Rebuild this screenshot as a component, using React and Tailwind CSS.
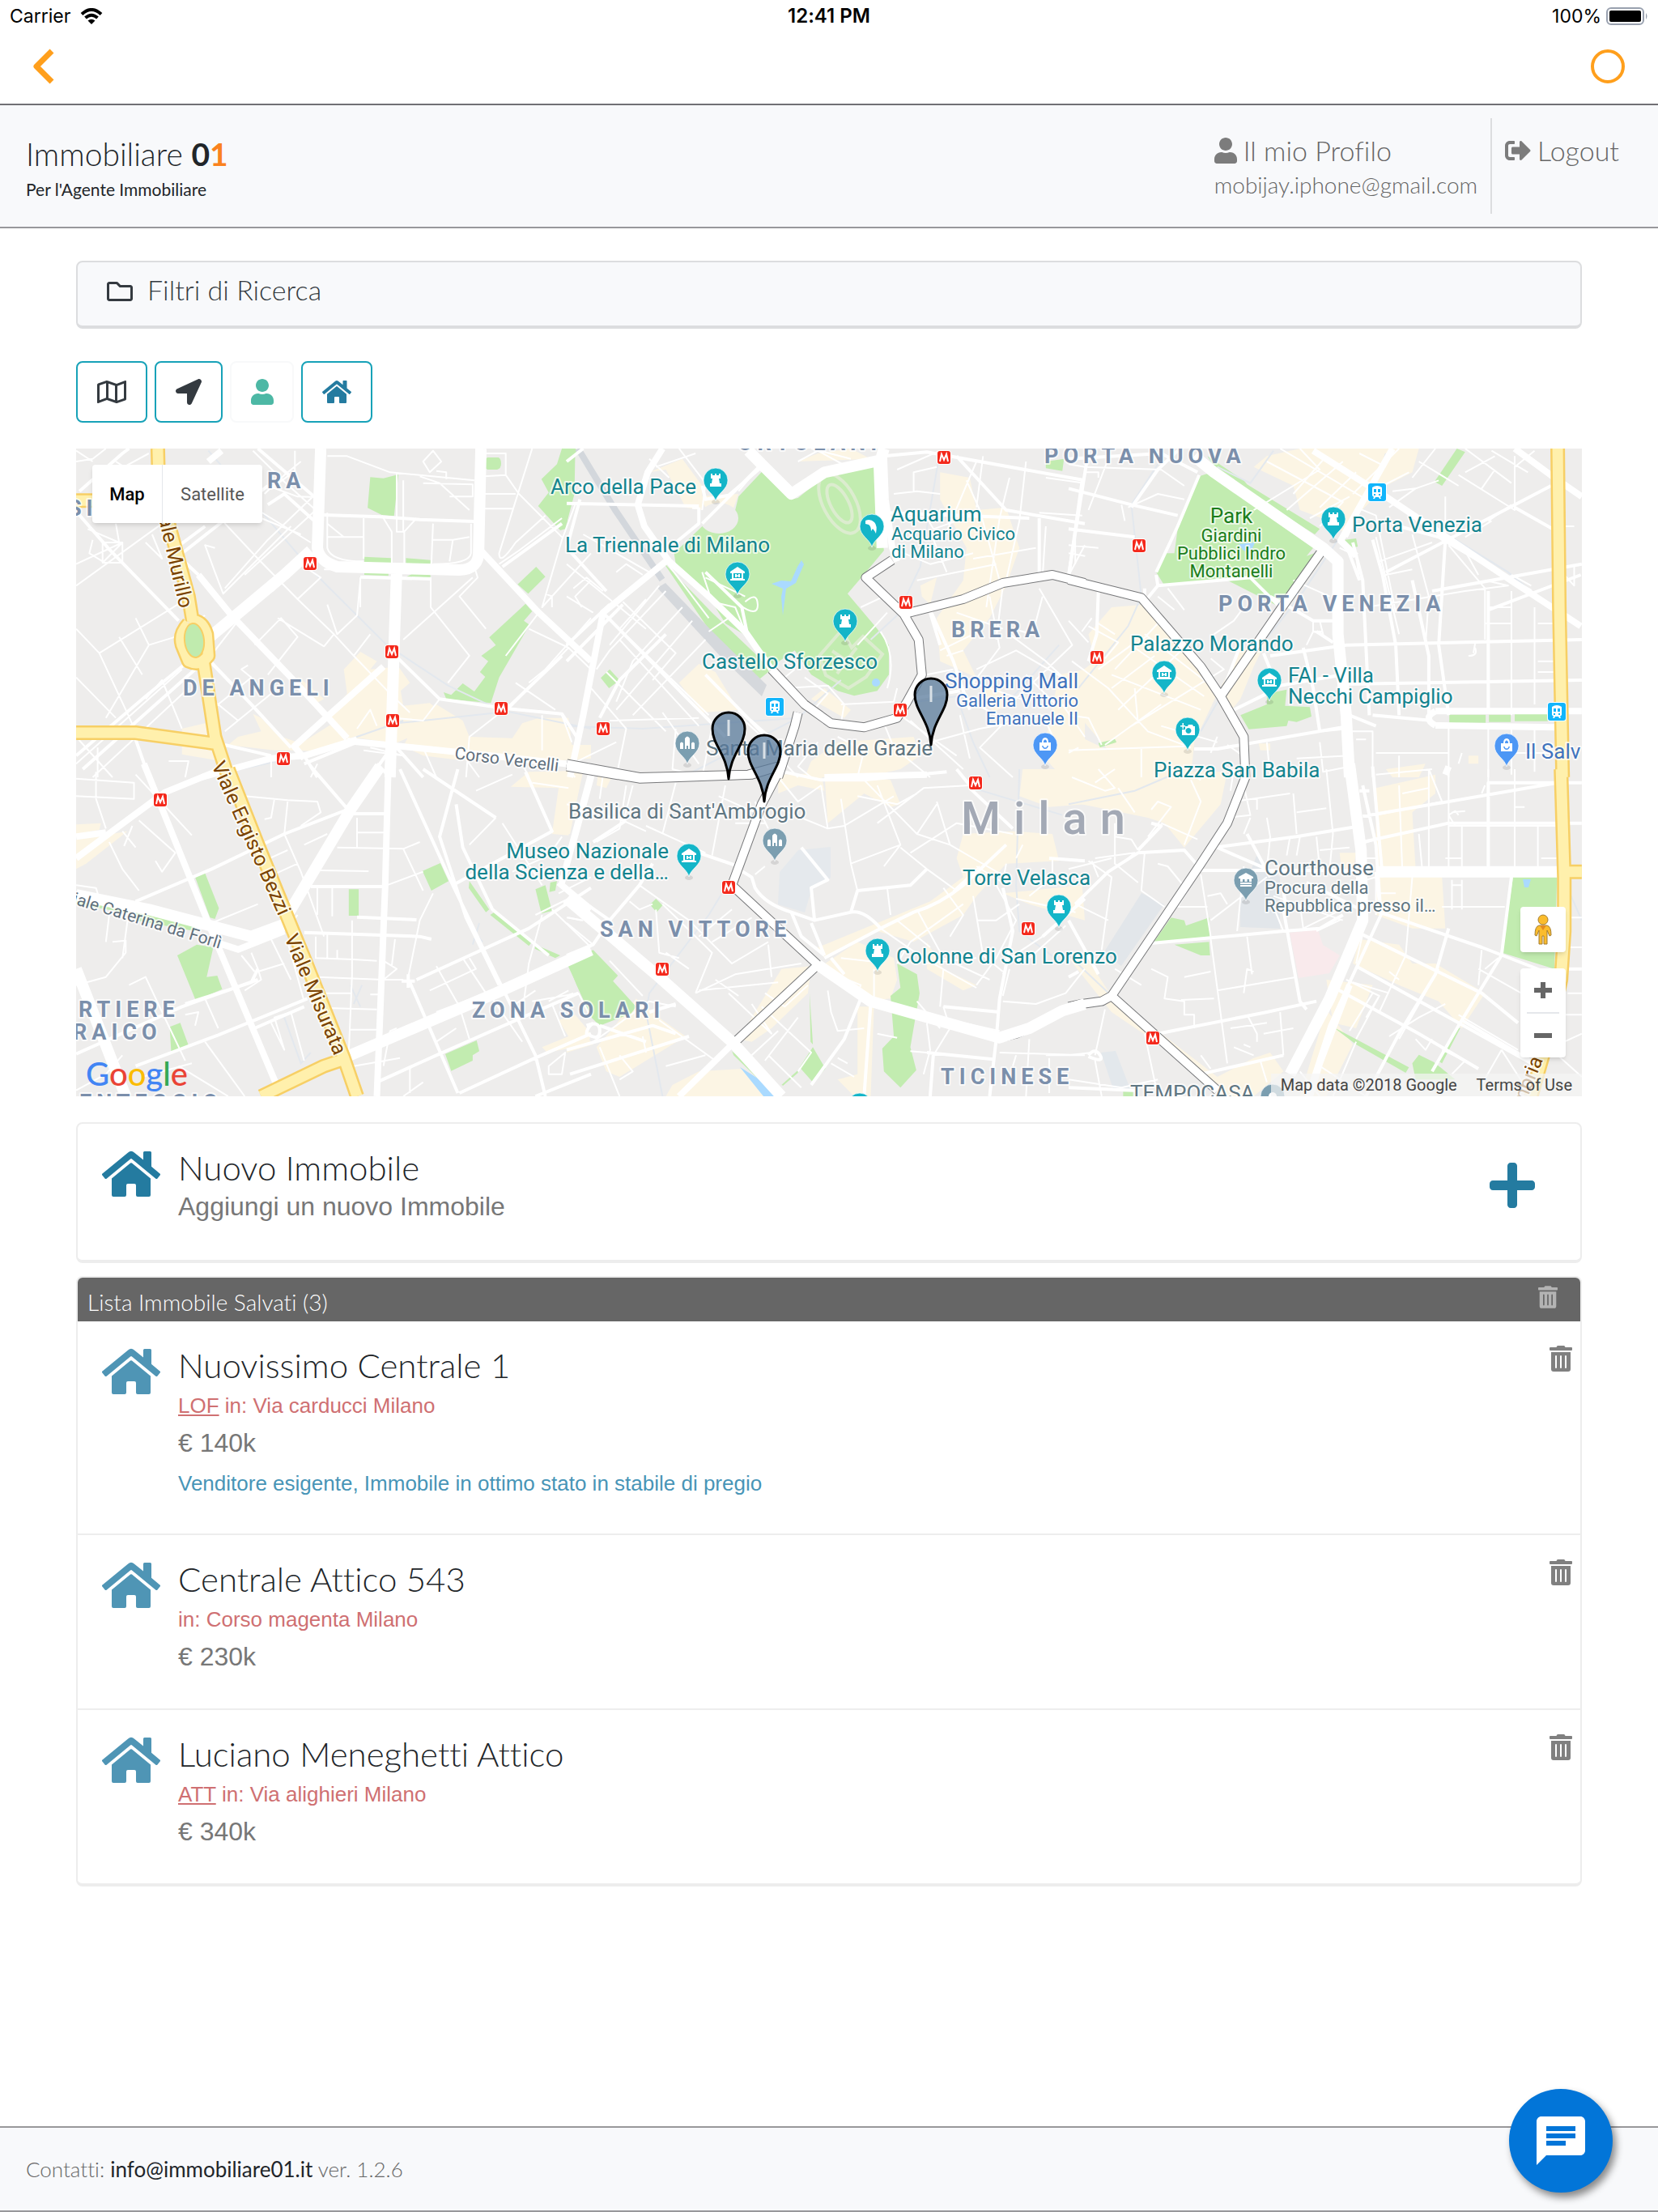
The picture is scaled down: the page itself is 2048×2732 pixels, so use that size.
import { FaHome, FaLocationArrow, FaPlus, FaRegFolder, FaRegMap, FaSignOutAlt, FaTrashAlt, FaUser } from 'react-icons/fa'

const listings = [
  { title: 'Nuovissimo Centrale 1', tag: 'LOF', address: 'in: Via carducci Milano', price: '€ 140k', note: 'Venditore esigente, Immobile in ottimo stato in stabile di pregio' },
  { title: 'Centrale Attico 543', tag: '', address: 'in: Corso magenta Milano', price: '€ 230k' },
  { title: 'Luciano Meneghetti Attico', tag: 'ATT', address: 'in: Via alighieri Milano', price: '€ 340k' },
]

// Vector tiles. Each tile has its own grid, 2.45 units per px across and 3 down.
const tiles = [
  {
    x: 90,
    y: 550,
    cream: 'M870 765L920 800L900 830L985 820L1020 880L992 910L1000 965L1080 955L1150 1020L1090 1010L1040 1070L975 1105L870 1085L820 1090L770 1010L830 920L820 830ZM545 995L570 1010L620 1075L690 1105L800 1020L840 1085L750 1135L680 1130L610 1130L470 1110L500 1080L570 1060ZM330 1050L400 1030L440 1110L450 1170L330 1145ZM1040 1020L1100 960L1180 1020L1200 1080L1330 1085L1360 1030L1410 1010L1500 1010L1510 1110L1568 1110V1160L1440 1170L1160 1165L1060 1150L1000 1115ZM680 855L760 940L730 960Z',
    green: 'M900 118L940 122L985 108L980 170L972 262L935 258L892 232ZM1255 45H1288Q1296 50 1296 68T1284 90H1255Q1246 86 1246 68T1255 45ZM1480 12L1520 12L1540 30L1520 40L1518 180L1490 310L1475 315L1408 225L1440 175L1418 125L1465 70ZM882 413L963 418V440L882 437ZM1008 418L1082 425V445L1008 440ZM882 463L955 467V484L882 480ZM1030 475L1082 480V490L1010 487ZM1402 450L1430 487L1378 550L1346 515ZM1370 587L1390 615L1365 650L1382 665L1290 860L1265 955L1130 940L1122 915L1145 925L1180 882L1215 912L1248 858L1232 840L1257 800L1236 780L1280 740L1260 712Z',
    transit: 'M410 20L560 230L720 460L950 740L1135 890L1290 980L1568 1050M980 1030L1290 990M390 1230L700 1150L860 1080L1000 1020',
    thin: 'M10 60L60 50L100 12M10 20L60 60M130 60L155 80L230 30M672 20V95L600 160M545 20L640 135L735 240M590 150L680 190L735 192M580 180L640 110L690 60M560 240L720 360M570 270L690 330M735 180L590 350L460 530M735 240L520 480M660 300L455 550L430 470L400 370L430 380M10 520L270 290M150 360L10 440M45 310L140 360L130 290M60 350L50 400L90 430M90 360H150V435H90ZM90 360L150 435M150 360L90 435M220 360L270 420L240 330M10 680L80 770L160 980L190 1060M330 580L80 770M190 640L230 740L310 710M140 710L210 850M230 740L100 1010M330 830L10 1180M60 1230L350 900M220 940L270 870L330 1050M10 860L130 1010M380 640L330 560M400 630L310 700M500 650L430 760M620 640L760 745L790 700L680 570M550 740L630 640L680 710L590 850M790 700L850 780L960 920L1020 990M850 780L900 700M770 590L800 700L860 630L870 500M605 540L690 440L750 490L680 570L560 420L430 250M740 130L760 20M770 40L830 40L960 100L1215 130M1060 60L1090 20L1115 60L1080 100ZM1100 95L1130 100V125M980 100V320H1000V130M1050 115L1110 140L1200 240M1060 140L1210 145V190H1140M880 270L880 420M770 340L820 340H880M820 340L770 290M1090 290L1085 440M1090 350H1150L1200 340M1150 350L1140 430M935 260L965 320V440M1040 270L1003 320V440M770 250V380Q780 430 880 430M1205 290V400Q1200 440 1090 440M760 460H960M870 490L870 600M1083 490V600L1200 780L1135 880M1210 490L1000 720M1215 450L1225 490L1170 560L1250 680M1390 12L1290 400Q1290 450 1340 360L1430 260M1240 30H1310V110L1245 115M1310 110L1350 180L1480 340M1245 180H1340M1240 235H1330M1290 440L1350 390L1480 270M1520 220L1480 350L1420 600L1568 400M1430 550L1450 560V600M1568 500L1520 560L1540 600M1410 620L1310 780M1380 680L1500 750L1568 830M1500 750L1320 975M1568 640L1430 830L1380 880M1310 975L1200 1080L1190 1230M1480 1000L1510 1100M1420 1000V1130M1340 880L1460 980M1110 940L1060 1020L970 1010M860 1050L900 980L920 1040M430 970L540 860L510 830L530 815M460 1060L600 920M410 800L540 960L630 1080M500 1020L430 950M10 1080L120 1230M75 1120V1230M290 1170L350 1170L340 1230M740 1180L720 1230M600 1170V1230M880 1130L1000 1150L900 1120M1060 1120L1100 1230M1170 1130L1230 1230M1360 1180L1380 1230M1480 1170L1520 1230',
    mid: 'M20 170L150 30L170 12M10 245L110 385L320 650M560 12L740 200M740 290L640 180L590 220M400 300L290 400M590 150L310 420M760 258L930 265L1050 275L1215 282M870 488L1085 495M310 400L380 480M400 780L540 960L660 1120M985 790L1110 940L1310 975L1480 995L1530 1090M340 810L220 930L10 1150M370 830L30 1200M1300 450L1480 290M460 1110L600 1150M1310 980L1480 780M860 1100L700 1180M970 1110L900 1230M980 1120L1060 1230M190 1090L230 1230M700 1150L740 1230',
    wide: 'M1235 390L1410 620L1568 800M380 480L480 630L660 860L830 1085M830 1095L1190 1140L1568 1190M940 820L770 1005L670 1115L700 1160M700 1150L600 1160L390 1230M700 1150L860 1090M410 60L450 20',
    major: 'M750 12L740 380Q745 430 800 450L1170 462Q1230 460 1228 390L1235 12M720 390L640 480L415 710M980 460L972 750L960 1230',
    cased: '',
    yellow: 'M257 12L260 150L290 290L350 560L362 650M350 660Q320 700 330 740L350 800Q385 820 410 780L405 700Q390 640 350 650M395 800L430 1080L470 1230M10 1065L190 1065L430 1105M10 205H60',
  },
  {
    x: 90,
    y: 950,
    cream: 'M10 205L85 200L80 225L10 240ZM10 262L165 230L40 350L10 370ZM1380 10L1545 5L1500 245L1450 240L1470 70L1325 65ZM1470 930L1520 910L1568 980L1560 1020L1435 1050L1420 1030L1500 990Z',
    green: 'M370 400L400 385L442 515L430 555L415 550ZM10 480L175 515L175 535L10 500ZM190 530L370 580L370 600L190 560ZM316 690L375 650L425 660L405 770L437 765L452 815L372 857ZM293 955L325 940L352 1030L298 1055ZM835 445H865V543H835ZM1058 377L1112 348L1137 415L1085 450ZM1200 415L1260 520L1250 530L1198 440ZM1275 530L1390 640L1380 655L1263 540ZM1400 650L1475 690L1460 700L1398 665ZM1400 445L1430 430L1450 525L1418 535ZM1445 420L1465 415L1460 450L1442 455ZM1492 712L1568 675V860L1545 850ZM1127 1055L1222 1005L1230 1045L1210 1060V1080L1145 1118Z',
    transit: 'M10 330L130 220L280 85L460 5M840 800L870 880M850 870L875 800M640 920L690 1090L720 1050M1200 580L1240 640M1230 570L1210 650',
    thin: 'M10 35L185 50V110L10 100M70 10V110L100 220M190 20L360 245M110 270L150 370L200 450M200 190L310 310L270 380L250 340M150 230L190 290M180 210L155 285M10 430L70 440L80 480M120 640L160 635V680L100 770L10 800M170 520L150 700M520 100L650 115L740 120L750 160L690 210M610 110L600 180L580 185M650 120L640 240L690 380L760 620M650 300L560 350M770 240L700 280M680 350L590 400M800 290L1000 295L1050 270M860 235H945M860 180V290M750 375L895 378M740 440V540M785 440V545M680 540L640 600M770 610V700M800 670V700M735 620V700L850 705L920 710M845 560V760L835 1050M740 770L940 780M740 830L840 830M770 885L920 890M840 965L930 965M900 835H940M940 710L980 740L940 780M940 780H1000M1000 295L1060 450M950 430L1060 380M975 630L965 730M1090 460L1050 560L1015 770M1100 730L1170 880L1200 1000M1180 700L1250 830L1100 900M1080 820L1220 740L1200 700M1340 870L1400 820M1270 850L1360 1010M1100 1010L1160 960M1390 860L1530 830L1568 920M1450 870L1490 990M1500 820L1440 860M1568 560L1500 480L1400 540M1420 540L1380 720L1365 860M1450 520L1568 660M1500 550L1540 560M1220 80L1330 20M1280 180L1200 280M1300 200L1420 430M1390 50L1500 70M1480 250L1440 320L1330 380M1470 460L1568 400M110 540L100 640M420 570L560 500M540 680L560 740L570 780L520 820M510 690L550 750M560 750L640 720M600 630L660 780M650 640L700 860M170 800L220 770L270 900L340 1080M340 910L380 900L370 950M400 850L440 960M10 1190L100 1130L150 1060M210 1140L360 1090M400 1010L520 1212M320 1100L470 1212M600 940L640 1040L610 920L660 900L700 1080M940 1100L960 970L980 960M850 1100L990 1070M1020 1200V1100M1060 1160L1000 1212M1440 1100L1490 1050L1480 1130L1440 1130Z',
    mid: 'M190 490L420 370L640 240L830 150M990 0L1150 430L1240 660L1400 1060L1430 1212M720 -10L840 160M720 435H945M700 605L1050 620L1085 630M860 548L1040 558M1040 780L1380 590L1568 440M10 1055L330 880L560 780M190 1100L440 985L710 850M1170 1200L1390 1075L1568 980M1020 790L1165 1200M560 740L540 790L340 870M1165 0L1110 250L1190 550L1290 800M1160 130L1180 290L1270 520L1440 690M1060 0L1280 180M1370 10L1450 230L1150 430M550 960L700 880M920 1160L1100 1060L1360 920L1530 830M1015 760V810M995 785H1035M1400 1212L1568 1130M840 165H945M960 30L920 -20',
    wide: 'M10 330L130 220L280 85L430 10M10 250L100 235M430 640L500 668L640 600M215 -20L420 600L620 1180M1470 420L1568 520M1568 20L1480 420M955 -20L945 440L920 1212',
    major: 'M10 465L230 520L540 620L650 570M930 -10L840 150L650 540M10 740L160 1212M820 1070L1030 960L1280 830L1568 670',
    cased: '',
    yellow: 'M470 0L560 280L640 520L700 700L820 1070L860 1212M820 1075L760 1100L570 1212',
  },
  {
    x: 700,
    y: 550,
    cream: 'M250 100L350 50L410 150L410 240L360 230L300 90ZM400 190L520 180L500 250L430 250ZM860 12L920 50L700 60L760 30ZM1130 100L1220 120L1240 240L1330 230L1370 380L1330 520L1280 640L1200 760L1240 860L1130 800L1120 640L1200 500L1210 380L1130 200ZM340 880L400 810L450 840L520 980L410 990ZM780 900L860 980L840 1010L740 940ZM820 1100L1050 1080L1070 1150L1010 1200L900 1230H720L740 1170ZM1250 900L1300 880L1340 960L1290 990ZM1490 850L1568 830V1230H1500L1440 1150ZM1070 520L1120 490L1100 590L1075 560Z',
    green: 'M595 92L680 200L700 195L780 115L930 70L945 200L960 390L895 485L850 550L940 680L975 740L975 850L940 910L870 928L820 910L740 850L690 760L620 820L585 790L550 710L480 660L430 560L330 440L325 400L410 300L500 290L520 190ZM0 12L45 20L20 40L18 180L0 290ZM290 430L440 620L620 830L585 865L440 700ZM130 830L160 870L128 900L103 862ZM1450 60L1505 50L1500 95L1450 85Z',
    transit: 'M1130 20L1070 450L1000 630L920 720M0 1040L230 1050L700 1010L830 870M1000 960L1180 930L1230 1100L1280 1230M1330 960L1490 740M350 1230L700 1010',
    thin: 'M0 440L120 560L240 680M50 330L250 470M0 560L80 620M20 530L60 490L110 540M150 470L180 440L230 480M280 520L130 740M170 580L330 770L260 870M240 570L160 680L430 1000M300 540L130 760L90 830M350 600L200 800L150 950M380 650L150 980M420 720L200 1000M160 720L400 1040M120 840L300 1060M60 880L180 1050L150 1230M130 1020L400 1010M250 50L310 120M340 12L420 140L410 240M270 80L390 30M590 70L520 170M700 60L760 20L850 80M740 12L860 50M410 470L440 580L510 600L540 690M420 490L540 560M520 590Q580 640 578 590T540 580M300 430L430 640M430 690L490 640M290 990L400 1180M330 1050L320 1200L420 1230M440 1040L410 1230M520 1000L600 1090M600 1100L700 1230M660 900L790 890M790 890L840 960L830 1030M720 860L790 920L740 990M690 830L640 880M830 960L990 950L1000 900M950 690Q1000 780 970 900M890 600L960 560M970 620L880 740M1000 90L1130 20M990 180L1060 170L1130 180M1050 170V100L1120 80M1000 260L1090 270L1110 310L1250 250M980 380L1100 440L1230 400M1060 500L1300 440M1150 470L1110 350M1240 60L1150 320M1260 40L1240 230M1390 60L1370 280M1450 120L1568 140M1340 120L1310 270L1270 600M1430 250L1560 260M1210 130L1250 240L1310 500M1370 280L1330 500M1450 300L1440 490M1568 370L1520 480M1230 420L1420 380M1440 560L1410 700L1350 680M1430 530L1530 740L1350 950M1320 680L1180 620M1320 520L1300 720M1280 560L1310 750L1230 880L1400 950M1130 760L1230 700M1150 780L1200 760M1240 830L1360 760L1500 860M1090 850L1170 830M1340 700L1450 800L1520 880M1390 850L1480 960M1040 1020L1110 1100L1200 1200M960 1030L990 1120L1100 1230M1020 1010L1180 1150M820 1080L900 1130L880 1230M1100 1100L1250 1050L1380 1020M1240 960L1330 1020L1250 1120L1350 1230M1300 1040L1440 1000L1480 1100M1190 1000L1220 1160M1500 960L1568 1080M0 1190L150 1100M760 1100L700 1190L740 1230',
    mid: 'M0 215L400 225M0 60L50 12M40 200L0 380M0 380L120 540M110 620L350 920L480 1080M0 740L130 590M170 590L0 800M590 70L410 290M410 150L420 200L490 185L590 80M400 230V290L330 360M420 470L530 600L545 690M960 40L1090 25L1568 130M1180 40L1330 240L1568 290M970 250L1400 270M1100 610L1170 800L1220 980M1130 740L1100 620M1040 940L1190 910M1430 270L1430 480M1560 130L1520 480M100 1010L160 870L300 700M520 980L640 1110M420 850L620 1100M380 230H400',
    wide: 'M300 430L110 620L50 1000L10 1230M290 12L245 100L215 220L235 300L310 430L430 560L540 690L620 830M960 40L965 200L985 380L1000 430',
    major: 'M550 20L590 70L680 180L780 100L950 55L960 12M945 50L955 380',
    cased: 'M985 425L905 490L1020 625L1065 720L1075 850L1030 950L1000 1010L900 1045L800 1030L720 960L620 830M1020 625L1200 570L1320 510L1470 480L1568 510M700 990L690 1040L640 1230M0 1180L220 1230L550 1220L640 1190',
    yellow: '',
  },
  {
    x: 700,
    y: 950,
    cream: 'M0 60L40 60L10 240L0 240ZM95 20L140 20L120 70L90 60ZM640 20L770 15L780 80L700 60L640 90ZM780 10L980 40L1010 130L980 140L900 90L790 200ZM1200 240L1350 230L1470 240L1490 340L1330 350L1240 470L1200 540L1050 640L940 600L780 700L760 660L880 600L1000 540L1100 490L1200 400L1180 330ZM1380 0H1568V130L1460 140L1370 100ZM880 640L990 700L1000 780L980 850L900 860L770 730ZM1320 460L1560 430L1568 560L1400 500ZM650 740L740 730L730 830L620 960L560 1010L520 1000ZM210 850L290 930L360 990L160 1140L120 1120L90 1030L140 960ZM880 880L930 880L920 1212H870L820 1150L880 1130ZM0 1010L60 990L80 1020L0 1050ZM400 1120L530 1110L600 1212H300L320 1170ZM1090 640L1140 740L1240 800L1200 820L1090 740Z',
    green: 'M0 710L80 670L155 765L140 785L210 880L195 905L100 950L75 920L30 800ZM252 502L270 480L290 505L272 530ZM1000 720L1060 760L1068 830L1040 1030L1058 1115L1010 1180L960 1120L955 1035L990 990L980 840L1010 810ZM500 1045L600 1150L590 1160L505 1060ZM745 1030L783 1110L745 1160L705 1105ZM735 830L742 960L745 1020L738 1010ZM650 1170L700 1115L700 1125L655 1172Z',
    transit: 'M590 130L500 400L430 540L250 830L240 900L290 1212M1370 0L1360 430L1370 600L1500 720M1230 70L1500 170',
    thin: 'M0 130L170 190L240 230M180 60L160 220L90 270M110 20L100 110M200 60L170 200M330 50L290 240M480 60L440 320M240 210L420 310M460 100L570 160M510 200L600 200M570 120L610 220M600 360L570 390M620 0L700 120L770 60M770 60L790 220L840 210M650 150L790 220M830 110L860 350L880 450M840 210L990 100M880 100L1000 130M900 40L1060 240L1120 130M940 200L1080 70L1220 60M1000 130L1060 90M1010 280L860 350M1010 290L1090 370L1180 450L1230 380M1060 240L1160 280L1230 330L1330 400M1040 310L1180 200L1350 240M1090 370L1040 430M960 360L1010 280L940 60M1120 120L1160 280M970 440L980 540M1140 440L1200 540L1160 620M1250 360L1170 450M1380 280L1360 330M1330 350L1320 420L1240 360M1470 330L1470 400L1400 470M1230 470L1260 690L1320 750M1300 430L1360 560L1300 700L1240 800M1360 480L1540 530M1370 500L1300 560L1240 560M1440 620L1340 700L1320 760M1510 580L1400 700M1200 500L1040 640M1060 520L1140 700L1280 780M1000 560L1100 660M1040 640L1000 720M1080 720L1240 700M950 590L1080 700L1240 810M1140 740L1130 880M1060 860L1130 960M830 700L940 715M0 570L80 650M0 550L50 560M20 830L0 840M270 520L280 680L340 700M290 500L440 680L390 830M190 490L220 520L260 500M220 430L370 560L500 720L610 640M610 650L620 770M400 620L500 520M440 640L560 550M300 680L370 740M390 830L510 760L710 720M400 820L640 790M520 840L450 780M130 710L230 840M330 880L250 860L150 950L80 1010M360 870L480 990M490 830L620 980L560 870M590 880L740 1050L700 1120M640 970L560 1060M700 920L600 1080M730 800L660 880L600 830M610 1060L710 1180M160 1060L200 1120L160 1150M230 990L240 1050M100 1030L160 1212M300 1100L420 1060M280 930L450 1080M790 820L800 900L820 970L900 960M850 780L890 800L880 830M930 740L930 850M940 980L1000 995M820 1070L850 1090M800 1090L870 1140M1040 1045L1090 1050M1090 940L1100 1040L1080 1130M1140 880L1160 960L1110 1060M1200 940L1310 970M1320 860L1420 870L1510 830L1568 740M1340 740L1320 840M1450 1060H1568M1360 1060L1350 1100M1310 1050L1568 1060M1460 1070V1200M1400 1000L1390 1212',
    mid: 'M0 690L80 650L130 560L220 430L260 350M130 560L60 500M80 270L180 190M520 360L400 310M520 370L560 400L570 440Q600 500 680 530L750 560L860 530L880 450L1040 430L1090 370M750 560L740 440L790 410L710 290M740 570L780 690M860 530Q900 520 950 590L780 700M950 590L1050 530Q1130 500 1200 430L1330 280M680 530L710 620L780 690M0 1040L260 950L330 980M100 950L240 1010M60 950Q100 930 100 970T60 980Q60 960 80 940M10 1130L370 990M330 870L250 900M920 870L900 1212M890 850L840 1000L740 1170M1310 850L1300 1000L1280 1212M1110 1050L1100 1212M1090 1050L1290 1075M1140 880L1310 900M1320 440L1350 600L1310 850M1460 330L1568 340M1440 620L1568 480M1220 70L1350 220M620 0L770 40L900 40L1150 10M840 760L800 700M1220 60L1180 0',
    wide: 'M500 1020L340 1212M80 0L20 270M780 30L1090 20',
    major: 'M0 480L270 760L500 1010L650 1212M760 725L920 860L1310 995L1400 960L1500 895L1568 870',
    cased: 'M0 -10L220 35L560 20L640 -10M650 -10L590 130L500 430L760 725L510 1010M1310 995L1360 980L1400 960',
    yellow: '',
  },
  {
    x: 1320,
    y: 550,
    cream: 'M600 40L700 12L1060 12L1040 100L960 150L880 250L840 340L810 290L700 240L680 150L560 80ZM130 600L230 590L300 680L450 920L380 1100L370 1230H0V1060L120 1130L50 1030L20 960L0 870L80 800L60 700ZM520 760L600 720L560 820L520 940L480 1000L450 920ZM960 1200L1080 1180L1060 1230H980ZM575 1105L610 1105V1130L580 1130ZM1210 1150L1240 1150V1180L1210 1180Z',
    green: 'M395 115L420 105L740 380L720 410L765 390L640 600L560 550L480 500L290 520L265 470L290 400L320 400L330 310ZM540 145L760 310L745 330L530 165L450 100L420 40L530 130ZM1175 12L1200 25L1130 150L1107 135ZM835 350L870 345L875 375L860 380ZM600 920L660 905L655 965L730 970L735 1005L690 1025L665 1020L660 1040L545 1052L520 1000L600 960ZM1152 998H1262V1028H1152ZM1272 998H1338V1025H1272ZM1350 995H1450V1022H1350ZM90 1103L140 1088L145 1100L95 1120Z',
    transit: 'M270 70L190 220L220 560L180 670L30 900M620 20L550 140L450 80M740 20L960 190L1330 470L1480 620L1500 1230M960 30L930 140L700 560L460 930L400 1060',
    thin: 'M50 100H90V120M0 70L50 80L280 90L350 150M180 230L270 180L350 200M120 50L60 240M160 220L170 280M0 370L90 380M20 340V440M0 400L50 410M0 650L60 730M60 670L150 730L110 790M90 660L140 700M10 800L120 900L240 1060L370 1120M90 830L190 740M130 850L400 980M200 750L410 930M230 700L420 880M270 660L140 830M130 900L260 780M190 1040L470 830L430 790M150 980L350 750M210 1030L200 900M110 1110L280 960M0 1000L60 1010L100 1110M280 1040L450 1100M0 1130L350 1115M220 1120V1230M30 1120L0 1140M700 12L760 90L560 240M640 12L900 200M780 40L680 180M830 60L660 240M870 100L760 230M600 60L830 210L760 300M850 190L730 270M1000 12L860 180M880 30L960 80M1030 100L950 150M1060 60L1180 150M1110 12L1040 120M1200 12L1340 140M1200 100L1290 40M1250 160L1290 90M1050 160L980 170M1350 40V240L1180 110M1350 80L1410 20M1270 280L1340 220M1390 100L1280 20M970 230L1050 160L1120 130M870 230L930 260L990 620M930 340L1000 700M1040 330L1090 560L1080 740M1100 360L940 430M1150 370L1260 530L1260 720M1140 190V340M1200 340L1280 280M1190 370L1240 480M1270 600H1340M1260 660H1340M1420 660H1480M1340 540V1000M1410 600V960M1420 800H1470M1420 840H1470M1400 520L1340 480M1530 440V520L1500 480M1530 300H1500M960 480L1040 460M1260 500L1330 520L1200 540L900 600M820 380L870 410L880 500M760 650L770 700L740 690L720 740M740 650V690H770M680 500L790 560M440 700L500 650L530 600M300 530L350 610M270 560L320 610M600 1100L610 1230M690 1160L850 1150M760 1100L770 1210L850 1190M770 1060L850 1050M860 1060H920V1230M870 1090H900M1000 1150V1230M1150 1040V1230M1190 1140L1180 1180M1270 1040V1230M1340 1050V1220M1350 1140H1480M1410 1050V1210M930 1140H1150M450 1080L430 1140M480 1110L540 1160M40 690L70 640M1210 780Q1240 780 1230 750M1230 735L1225 770',
    mid: 'M0 160L190 220L330 260M60 20L0 480M0 310L200 340M330 20L270 90L190 230M395 110L330 300L265 470M0 50L280 30L390 100M265 480L270 520L550 490L640 600M610 780L840 740L1553 720M590 770L610 830L605 900M710 750L740 900L760 1060M500 980L600 920L640 890L830 850M830 885L1553 870M380 1125H450L850 1040M930 120L840 340M920 350L950 480L990 740L1000 1000M1000 300L1120 340L1400 540M1140 350L1120 740L1150 1000M1270 540V980M860 360L890 500L910 1000M1040 500L1090 780V1000M1550 480L1270 610M1460 150L960 470M1100 540L1553 440M1350 230L1480 320M840 370L880 500M920 1000L1100 1020M860 1230L850 1000L930 1040M670 600L740 650H820M610 560L700 620M460 930L520 740M230 530V580L270 520M750 690L800 730M90 540L85 700L60 800',
    wide: 'M740 20L960 190L1350 510L1550 670M1350 12L1470 120L1553 190M1110 985H1553M1110 1038L1470 1045M1110 985Q1070 1010 1110 1038M980 12L820 360M820 350L870 410',
    major: 'M380 40L440 100L770 380L815 430L815 700L840 1000L850 1230',
    cased: 'M0 498L220 565L280 650L400 820L460 930L530 1080L535 1230M770 385L640 610L460 930',
    yellow: 'M1480 12L1485 600L1495 1230',
  },
  {
    x: 1320,
    y: 950,
    cream: 'M0 10L400 10L480 10L460 130L350 290L290 200L240 180L0 120ZM930 70L1110 20L1110 90L1040 160L1050 370L930 370ZM930 400L1130 400L1140 590L1040 590L930 540ZM880 630L1000 650L1040 720L1110 720L1260 830L1190 960L1120 860L1000 800L860 720ZM0 700L60 710L130 840L270 970L450 1140L560 1070L610 1050L650 1120L560 1212H460L420 1140L130 900ZM780 890L700 1212H780L860 1020ZM780 780L920 800L870 960L800 940ZM820 310L870 310L860 380L825 360ZM0 430L40 470L0 480Z',
    green: 'M1345 400L1478 400L1470 740L1312 680ZM310 550L350 560L355 580L425 550L428 625L255 645ZM320 650L425 640L428 690L400 690ZM825 730L845 740L822 805L803 795ZM800 955L1030 1105L1020 1125L870 1020ZM1175 955L1185 960L1130 1090L1118 1080ZM1040 1090L1060 1058L1105 1085L1170 1150H1050ZM165 1195H195V1212H165Z',
    transit: 'M0 130L200 80L330 12M1500 0L1495 400L1553 560M0 690L130 840L440 1190',
    thin: 'M90 0L140 70L110 80L10 30M140 0L80 50M250 150L270 120L310 140L240 250M280 200L390 260M370 40L400 120L350 280M400 40L370 20M150 70L200 160M140 250L190 260L210 300M140 200V350L210 420M80 330L200 310L150 360M0 370L130 330M230 310L220 450L290 510M270 350L300 360L360 450L330 510M70 340L90 400M20 500L120 560M100 670L130 400L60 340M300 510L420 510M400 390L430 620M420 470L460 460L480 500M530 360L510 600M430 560L600 400M480 180L550 170L530 60M570 110V150M680 90L690 240M690 160L780 145M500 120L670 90M550 180L530 240M600 180L610 250L600 370M670 250L660 320M750 250L760 370M690 320L700 250M760 300L850 290M780 0L800 240L790 370M500 0L490 80M900 330H930M880 280L930 260M930 20L1100 0M930 170L1130 120L1090 0M1010 90L1090 70M1000 60L1010 380M1090 0V370M1060 240L1070 370M1150 0V370M1150 210H1480M1270 0V370M1190 210V370M1140 330H1190M1350 0V360M1420 210V360M1430 330H1480M1160 160L1200 155M1170 210L1150 170L1170 155L1180 170M1250 90L1260 60M1350 140H1380M940 460H990M900 410L930 400V540M1040 400L1020 690M1160 410V520M1190 410V520M1160 430H1190M1130 510H1320M820 560L750 600M610 480L650 600M620 470L830 560M700 500L710 590L810 530M540 620L555 760M430 630L480 1090M350 770L430 750M250 740L300 770L290 850L350 860L350 910L380 910V960M140 740L220 800M450 820L690 770M340 855L440 850M530 830L540 740L560 750M540 910L570 980V1010M530 1020L550 1030M590 980L680 960M640 900L650 1060M490 960L600 940M500 1030L560 1060M580 1080L600 1160M110 890L80 1060M0 1060L70 1050M80 1080L100 1212M230 980L270 1212M0 1150L160 1180L270 1150M400 1060L430 1110M840 780L940 840L900 920M860 790L970 830M920 830L850 970M970 750L1000 780M890 610L870 720M940 840L870 1000M1020 690L940 900M1120 740L1000 1000M1250 670L1240 800M1240 740L1370 830M1260 740L1300 700M970 990L1060 920L1140 870M1050 1000L1080 1040L1100 1000M1130 1040L1200 1080L1160 1130M1310 1040L1240 1190M1400 1212L1310 1040M1500 910H1553M1510 830H1553M1510 550H1553M1510 660H1553M1500 1010L1553 980M1180 910L1360 1040M1480 1060L1553 1140M700 1120L760 1212M760 1100L900 1212M870 1010L800 1212',
    mid: 'M440 290L690 250L860 215M440 285L600 370M400 375H880M250 645L430 625L650 600L760 590L830 540M650 520L700 860L720 890M660 530L650 450M720 420L900 530M20 500L120 380L210 310L350 300L400 370M270 980L600 900L750 860M400 1130L650 1060M540 240L610 400M930 380L945 540L790 950L720 1212M890 60L930 280L945 540M920 -10L950 400M880 80H910M890 175L1480 50M890 270L1150 200H1553M885 610L1250 830L1360 940M940 530L1250 660L1440 750M870 730L1180 940L1430 1110M790 800L1060 980L1240 1110M1340 400L1310 690L1180 950L1100 1120M1150 590L1110 760L1000 980L900 1212M1270 400V50H1553M0 770L30 750M0 560L90 760M250 200L280 210L210 300M0 1180L200 1190M60 1060Q80 1030 95 1060T60 1065M1190 930L1440 1110M1510 740H1553',
    wide: 'M1150 -10L1140 20M850 800L760 1090L730 1212',
    major: 'M850 -20L885 300L890 560L790 850L670 1130M930 380H1480',
    cased: 'M535 30L480 200L400 350L130 840L100 860L40 870L0 880M130 840L450 1190',
    yellow: 'M1490 0L1500 400V600L1490 780L1450 1000L1400 1212M1510 380H1553',
  },
]

const roadLayers = [
  { key: 'thin', className: 'stroke-white stroke-2' },
  { key: 'mid', className: 'stroke-white stroke-4' },
  { key: 'wide', className: 'stroke-white stroke-8' },
  { key: 'cased', className: 'stroke-[#77787a] stroke-12' },
  { key: 'major', className: 'stroke-white stroke-14' },
  { key: 'cased', className: 'stroke-white stroke-10' },
  { key: 'yellow', className: 'stroke-[#f7cf65] stroke-18' },
  { key: 'yellow', className: 'stroke-[#fff0ac] stroke-13' },
]

const metroStops = [
  [383, 696], [484, 805], [485, 890], [619, 875], [350, 937], [198, 988], [1166, 565], [1119, 744], [1112, 877],
  [745, 900], [1205, 967], [900, 1096], [1270, 1147], [818, 1197], [1407, 674], [1355, 812], [1424, 1282],
]

const trainStops = [[957, 873], [1701, 608], [1923, 879]]

const pois = [
  { x: 884, y: 593, icon: 'tower', color: 'fill-[#14b5c8]' },
  { x: 1077, y: 650, icon: 'fish', color: 'fill-[#14b5c8]' },
  { x: 911, y: 709, icon: 'museum', color: 'fill-[#14b5c8]' },
  { x: 1044, y: 767, icon: 'tower', color: 'fill-[#14b5c8]' },
  { x: 1291, y: 920, icon: 'bag', color: 'fill-[#4d97f5]' },
  { x: 849, y: 918, icon: 'church', color: 'fill-[#7b9eb0]' },
  { x: 957, y: 1038, icon: 'church', color: 'fill-[#7b9eb0]' },
  { x: 851, y: 1057, icon: 'museum', color: 'fill-[#14b5c8]' },
  { x: 1308, y: 1120, icon: 'tower', color: 'fill-[#14b5c8]' },
  { x: 1084, y: 1174, icon: 'tower', color: 'fill-[#14b5c8]' },
  { x: 1062, y: 1365, icon: 'tower', color: 'fill-[#14b5c8]' },
  { x: 1647, y: 641, icon: 'tower', color: 'fill-[#14b5c8]' },
  { x: 1438, y: 831, icon: 'museum', color: 'fill-[#14b5c8]' },
  { x: 1568, y: 840, icon: 'museum', color: 'fill-[#14b5c8]' },
  { x: 1467, y: 901, icon: 'camera', color: 'fill-[#14b5c8]' },
  { x: 1861, y: 921, icon: 'bag', color: 'fill-[#4d97f5]' },
  { x: 1539, y: 1087, icon: 'court', color: 'fill-[#7b9eb0]' },
  { x: 1572, y: 1354, icon: 'dot', color: 'fill-[#7b9eb0]' },
]

const poiGlyphs = {
  tower: 'M-6 -8H-4V-6H-1V-8H1V-6H4V-8H6V-2H4L5 4H7V8H-7V4H-5L-4 -2H-6Z',
  museum: 'M-9 -3L0 -9L9 -3V-1H7V6H9V8H-9V6H-7V-1H-9ZM-5 -1V5H5V-1ZM-3 0H-1V1.500H1V0H3V4H1V3H-1V4H-3Z',
  fish: 'M-8 -7Q-2 -10 3 -5Q7 -1 5 9Q3 5 1 3L-1 6Q-1 0 -4 -2L-8 -3Z',
  bag: 'M-7 -3H-4Q-4 -9 0 -9T4 -3H7V7H-7ZM-2 -3H2Q2 -6.500 0 -6.500T-2 -3ZM-4 1Q-3 5 0 5T4 1H2.500Q2 3.500 0 3.500T-2.500 1Z',
  church: 'M-9 7V0Q-7 -3 -5 0V7ZM-3 7V-6Q0 -11 3 -6V7H1V3H-1V7ZM5 7V0Q7 -3 9 0V7Z',
  camera: 'M-3 -4H0L1 -6H6L7 -4H9V7H-7V0H-3ZM1 -2A3.500 3.500 0 1 0 1.010 -2ZM-9 -5H-6.500V-8H-5V-5H-3V-3.500H-5V-1H-6.500V-3.500H-9Z',
  court: 'M-9 -4L0 -9L9 -4V-2H7V2H4V-1H1.500V2H-1.500V-1H-4V2H-7V-2H-9ZM-7 3H7V5H-7ZM-7 6H7V8H-7Z',
  dot: 'M0 -5A5 5 0 1 0 0.010 -5Z',
}

const poiLabels = [
  { x: 860, y: 610, text: 'Arco della Pace', anchor: 'end' },
  { x: 951, y: 682, text: 'La Triennale di Milano', anchor: 'end' },
  { x: 1100, y: 644, text: 'Aquarium' },
  { x: 1101, y: 667, text: 'Acquario Civico', small: true },
  { x: 1101, y: 689, text: 'di Milano', small: true },
  { x: 867, y: 826, text: 'Castello Sforzesco' },
  { x: 1332, y: 850, text: 'Shopping Mall', anchor: 'end', color: 'fill-[#3f73bd]' },
  { x: 1332, y: 873, text: 'Galleria Vittorio', anchor: 'end', small: true, color: 'fill-[#3f73bd]' },
  { x: 1332, y: 895, text: 'Emanuele II', anchor: 'end', small: true, color: 'fill-[#3f73bd]' },
  { x: 872, y: 933, text: 'Santa Maria delle Grazie', color: 'fill-[#5f7682]' },
  { x: 702, y: 1011, text: "Basilica di Sant'Ambrogio", color: 'fill-[#5f7682]' },
  { x: 826, y: 1060, text: 'Museo Nazionale', anchor: 'end' },
  { x: 826, y: 1086, text: 'della Scienza e della…', anchor: 'end' },
  { x: 1189, y: 1093, text: 'Torre Velasca' },
  { x: 1107, y: 1190, text: 'Colonne di San Lorenzo' },
  { x: 1521, y: 646, text: 'Park', anchor: 'middle', color: 'fill-[#1b7d1b]' },
  { x: 1521, y: 669, text: 'Giardini', anchor: 'middle', small: true, color: 'fill-[#1b7d1b]' },
  { x: 1521, y: 691, text: 'Pubblici Indro', anchor: 'middle', small: true, color: 'fill-[#1b7d1b]' },
  { x: 1521, y: 713, text: 'Montanelli', anchor: 'middle', small: true, color: 'fill-[#1b7d1b]' },
  { x: 1670, y: 657, text: 'Porta Venezia' },
  { x: 1396, y: 804, text: 'Palazzo Morando' },
  { x: 1591, y: 843, text: 'FAI - Villa' },
  { x: 1591, y: 869, text: 'Necchi Campiglio' },
  { x: 1425, y: 960, text: 'Piazza San Babila' },
  { x: 1884, y: 937, text: 'Il Salv', color: 'fill-[#3f73bd]' },
  { x: 1562, y: 1081, text: 'Courthouse', color: 'fill-[#5f7682]' },
  { x: 1562, y: 1104, text: 'Procura della', small: true, color: 'fill-[#5f7682]' },
  { x: 1562, y: 1126, text: 'Repubblica presso il…', small: true, color: 'fill-[#5f7682]' },
  { x: 1396, y: 1359, text: 'TEMPOCASA', color: 'fill-[#5f7682]' },
]

const districts = [
  { x: 911, y: 556, text: 'ORTOLANI' },
  { x: 1290, y: 572, text: 'PORTA NUOVA' },
  { x: 330, y: 603, text: 'RA' },
  { x: 84, y: 637, text: 'SI' },
  { x: 226, y: 859, text: 'DE ANGELI' },
  { x: 1175, y: 787, text: 'BRERA' },
  { x: 1505, y: 755, text: 'PORTA VENEZIA' },
  { x: 741, y: 1157, text: 'SAN VITTORE' },
  { x: 583, y: 1257, text: 'ZONA SOLARI' },
  { x: 97, y: 1256, text: 'RTIERE' },
  { x: 90, y: 1284, text: 'RAICO' },
  { x: 98, y: 1371, text: 'ENTEGGIO' },
  { x: 1162, y: 1339, text: 'TICINESE' },
]

const streets = [
  { text: 'Viale Murillo', place: 'translate(191 618) rotate(77)', className: 'fill-[#7a4300] text-[25px]' },
  { text: 'Viale Ergisto Bezzi', place: 'translate(261 945) rotate(66)', className: 'fill-[#7a4300] text-[25px]' },
  { text: 'Viale Misurata', place: 'translate(351 1158) rotate(67)', className: 'fill-[#7a4300] text-[25px]' },
  { text: 'mbria', place: 'translate(1882 1368) rotate(-68)', className: 'fill-[#7a4300] text-[25px]' },
  { text: 'Viale Caterina da Forlì', place: 'translate(76 1112) rotate(17)', className: 'fill-[#5f6f7d] text-[21px]' },
  { text: 'Corso Vercelli', place: 'translate(561 937) rotate(7)', className: 'fill-[#5f6f7d] text-[21px]' },
]

const propertyPins = [[900, 878], [944, 906], [1150, 836]]

function CityMap() {
  return (
    <svg
      className="block h-[800px] w-full bg-[#eeedec] font-[Roboto,sans-serif]"
      viewBox="94 554 1860 800"
      preserveAspectRatio="xMidYMid slice"
      role="img"
      aria-label="Milano"
    >
      {tiles.map((t) => (
        <g key={`${t.x}-${t.y}`} transform={`translate(${t.x} ${t.y}) scale(0.40816 0.33333)`}>
          <path d={t.cream} className="fill-[#fcf5e4]" />
          <path d={t.green} className="fill-[#c2ecb0]" />
        </g>
      ))}

      {/* Buildings and grounds */}
      <path d="M986 1050L1026 1046L1026 1084L1002 1100L994 1127L961 1117L963 1077Z" className="fill-[#e5e9ed]" />
      <path d="M1593 1152L1628 1148L1634 1167L1655 1180L1642 1202L1604 1208Z" className="fill-[#f9eaec]" />
      <path d="M1410 1103L1438 1117L1385 1193L1363 1177ZM1532 1110L1552 1057L1581 1083V1147L1532 1145Z" className="fill-[#e2e6ea]" />
      <path d="M1360 1300L1378 1298L1396 1345L1375 1345Z" className="fill-[#e3e8ec]" />
      <ellipse cx="888" cy="640" rx="24" ry="19" className="fill-[#eeedec]" />
      <g className="fill-none stroke-[#dceccf] stroke-4">
        <ellipse cx="1037" cy="622" rx="20" ry="40" transform="rotate(-28 1037 622)" />
        <ellipse cx="1037" cy="622" rx="11" ry="26" transform="rotate(-28 1037 622)" />
        <path d="M1012 810L1040 778L1052 800L1066 786L1090 808L1070 836L1048 850L1020 834ZM1028 804L1060 826M1058 800L1034 832" />
      </g>
      <path d="M990 692L993 697L983 720L971 727L967 760L965 737L967 727L953 721L965 717L977 718L985 700Z" className="fill-[#aadaff]" />
      <circle cx="1082" cy="843" r="5" className="fill-[#aadaff]" />
      <path d="M914 1318L941 1335L962 1354H943ZM1530 672L1550 670L1545 682L1536 680ZM1881 1086H1891L1888 1096H1883Z" className="fill-[#aadaff]" />

      {/* Railway yard */}
      <path d="M714 554L760 630L818 716" className="fill-none stroke-[#d3d7dc] stroke-8" />
      <path d="M812 726L822 720L880 780L947 846L941 860L892 813Z" className="fill-[#d5d8dc]" />

      {tiles.map((t) => (
        <path
          key={`${t.x}-${t.y}`}
          d={t.transit}
          transform={`translate(${t.x} ${t.y}) scale(0.40816 0.33333)`}
          className="fill-none stroke-[#e3e8ee] stroke-2 [vector-effect:non-scaling-stroke]"
        />
      ))}
      {roadLayers.map((layer, i) =>
        tiles.map((t) => (
          <path
            key={`${i}-${t.x}-${t.y}`}
            d={t[layer.key]}
            transform={`translate(${t.x} ${t.y}) scale(0.40816 0.33333)`}
            strokeLinejoin="round"
            className={`fill-none [vector-effect:non-scaling-stroke] ${layer.className}`}
          />
        ))
      )}
      <ellipse cx="240" cy="791" rx="12" ry="21" className="fill-[#c0ebae] stroke-[#f7cf65] stroke-2" transform="rotate(-6 240 791)" />

      {metroStops.map(([x, y]) => (
        <g key={`${x}-${y}`} transform={`translate(${x} ${y})`}>
          <rect x="-9" y="-9" width="18" height="18" rx="4" className="fill-white" />
          <rect x="-8" y="-8" width="16" height="16" rx="3" className="fill-[#f4291c]" />
          <path d="M-5 5L-3 -4L0 3L3 -4L5 5" className="fill-none stroke-white stroke-2" />
        </g>
      ))}
      {trainStops.map(([x, y]) => (
        <g key={`${x}-${y}`} transform={`translate(${x} ${y})`}>
          <rect x="-12" y="-12" width="24" height="24" rx="4" className="fill-white" />
          <rect x="-11" y="-11" width="22" height="22" rx="3" className="fill-[#12b5fb]" />
          <path d="M-6 -6Q0 -10 6 -6V4L4 6L5 8H3L2 6H-2L-3 8H-5L-4 6L-6 4ZM-4 -4V0H-1V-4ZM1 -4V0H4V-4ZM-4 2V4H-2V2ZM2 2V4H4V2Z" fillRule="evenodd" className="fill-white" />
        </g>
      ))}
      {pois.map((p) => (
        <g key={`${p.x}-${p.y}`} transform={`translate(${p.x} ${p.y})`}>
          <ellipse cx="0" cy="27" rx="5" ry="3" className="fill-black/10" />
          <path d="M0 26C-2 16 -15 12 -15 0A15 15 0 0 1 15 0C15 12 2 16 0 26Z" className={`stroke-white/70 stroke-1 ${p.color}`} />
          <path d={poiGlyphs[p.icon]} fillRule="evenodd" className="fill-white" />
        </g>
      ))}

      <g strokeLinejoin="round" className="stroke-white/70 stroke-4 [paint-order:stroke]">
        {streets.map((s) => (
          <text key={s.text} transform={s.place} className={s.className}>{s.text}</text>
        ))}
        {districts.map((d) => (
          <text key={d.text} x={d.x} y={d.y} className="fill-[#7b8fab] text-[27px] font-bold tracking-[6px]">{d.text}</text>
        ))}
        <text x="1187" y="1030" className="fill-[#a3a9b5] text-[56px] font-medium tracking-[16px]">Milan</text>
        {poiLabels.map((l) => (
          <text
            key={l.text}
            x={l.x}
            y={l.y}
            textAnchor={l.anchor || 'start'}
            className={`${l.color || 'fill-[#13848f]'} ${l.small ? 'text-[22px]' : 'text-[26px]'}`}
          >
            {l.text}
          </text>
        ))}
      </g>

      {propertyPins.map(([x, y]) => (
        <g key={`${x}-${y}`} transform={`translate(${x} ${y})`}>
          <path d="M0 84C-2 54 -20 42 -20 22A20 20 0 0 1 20 22C20 42 2 54 0 84Z" strokeLinejoin="round" className="fill-[#587a9b]/75 stroke-black stroke-3" />
          <path d="M0 11V31" className="stroke-[#d9e0e6] stroke-3" />
        </g>
      ))}
    </svg>
  )
}

function MapPanel() {
  return (
    <div className="relative mt-8 h-[800px] overflow-hidden">
      <CityMap />
      <div className="absolute left-5 top-5 flex h-[72px] overflow-hidden rounded-sm bg-white text-[22px] shadow-md">
        <button className="w-[87px] border-r border-gray-200 font-medium text-black">Map</button>
        <button className="w-[123px] text-[#565656]">Satellite</button>
      </div>
      <div className="absolute bottom-12 right-5 flex w-14 flex-col gap-5">
        <button aria-label="Street View" className="flex h-14 items-center justify-center rounded-sm bg-white shadow-md">
          <svg className="h-10 w-6" viewBox="0 0 24 40">
            <path d="M7 15Q2 16 2 27L4 28L7 21V38H11V28H13V38H17V21L20 28L22 27Q22 16 17 15Z" className="fill-[#fbbc2c] stroke-[#a27d33] stroke-1" />
            <path d="M8 15H16L12 21Z" className="fill-[#e58a1f]" />
            <circle cx="12" cy="8" r="6" className="fill-[#fbbc2c] stroke-[#a27d33] stroke-1" />
          </svg>
        </button>
        <div className="flex h-[110px] flex-col rounded-sm bg-white px-2 shadow-md">
          <button aria-label="Zoom in" className="flex flex-1 items-center justify-center border-b-2 border-gray-200">
            <svg className="h-5 w-[22px]" viewBox="0 0 22 20"><path d="M0 10H22M11 0V20" className="stroke-[#666] stroke-6" /></svg>
          </button>
          <button aria-label="Zoom out" className="flex flex-1 items-center justify-center">
            <svg className="h-5 w-[22px]" viewBox="0 0 22 20"><path d="M0 10H22" className="stroke-[#666] stroke-6" /></svg>
          </button>
        </div>
      </div>
      <a href="#google" className="absolute bottom-1 left-3 font-[Lato,sans-serif] text-[40px] leading-12 font-medium">
        <span className="text-[#4285f4]">G</span>
        <span className="text-[#ea4335]">o</span>
        <span className="text-[#fbbc05]">o</span>
        <span className="text-[#4285f4]">g</span>
        <span className="text-[#34a853]">l</span>
        <span className="text-[#ea4335]">e</span>
      </a>
      <div className="absolute bottom-0 right-0 flex h-7 items-center gap-6 bg-[#f5f5f5]/70 pl-3 pr-3 text-[20px] text-[#444]">
        <span>Map data ©2018 Google</span>
        <a href="#terms">Terms of Use</a>
      </div>
    </div>
  )
}

function StatusBar() {
  return (
    <div className="grid h-10 grid-cols-3 items-center px-3 font-[Inter,sans-serif] text-[23px] text-black">
      <div className="flex items-center gap-3">
        <span>Carrier</span>
        <svg className="h-5 w-7" viewBox="0 0 28 20">
          <path d="M2 7.500Q14 -3.500 26 7.500M6.500 12Q14 5.500 21.500 12" className="fill-none stroke-black stroke-4" />
          <path d="M9.500 15.500Q14 12 18.500 15.500L14 20Z" />
        </svg>
      </div>
      <span className="text-center text-[24px] font-semibold">12:41 PM</span>
      <div className="flex items-center justify-end gap-1.5">
        <span>100%</span>
        <svg className="h-[22px] w-[52px]" viewBox="0 0 52 22">
          <rect x="1" y="1" width="45" height="20" rx="5" className="fill-none stroke-gray-400 stroke-2" />
          <rect x="4" y="4" width="39" height="14" rx="2" />
          <path d="M49 7Q52 11 49 15Z" className="fill-gray-400" />
        </svg>
      </div>
    </div>
  )
}

function ListingItem({ item, first }) {
  return (
    <li className={`flex pl-[30px] pr-[10px] pb-10 ${first ? '' : 'border-t-2 border-[#ededed]'}`}>
      <FaHome className="mt-[30px] h-16 w-[72px] text-[#4f95b5]" />
      <div className="ml-[22px] mt-[30px] grow">
        <h2 className="font-[Lato,sans-serif] text-[42px] leading-12 font-light text-[#212529]">{item.title}</h2>
        <p className="mt-2 text-[26px] leading-9 text-[#cf7072]">
          {item.tag && <a href="#agenzia" className="underline">{item.tag}</a>} {item.address}
        </p>
        <p className="mt-1 text-[32px] leading-12 text-[#777]">{item.price}</p>
        {item.note && <p className="mt-1 text-[26px] leading-11 text-[#4895b7]">{item.note}</p>}
      </div>
      <button aria-label="Elimina" className="mt-[30px] h-8 text-[32px] text-[#808080]"><FaTrashAlt className="w-7" /></button>
    </li>
  )
}

function App() {
  return (
    <div className="flex min-h-screen flex-col bg-white font-['Liberation_Sans',Arial,sans-serif] text-[#212529] [font-variant-ligatures:none]">
      <StatusBar />
      <nav className="flex h-[90px] items-start justify-between border-b-2 border-[#707074] px-10 pt-[18px]">
        <button aria-label="Indietro">
          <svg className="h-12 w-7" viewBox="0 0 28 48"><path d="M24 5L5 24L24 43" strokeLinejoin="round" className="fill-none stroke-[#ff9f1c] stroke-7" /></svg>
        </button>
        <button aria-label="Stato" className="mt-0.5">
          <svg className="size-11" viewBox="0 0 44 44"><circle cx="22" cy="22" r="19" className="fill-none stroke-[#ff9f1c] stroke-4" /></svg>
        </button>
      </nav>

      <header className="flex h-[152px] items-start justify-between border-b-2 border-[#98989b] bg-[#f8f9fb] pl-8 pr-12 font-[Lato,sans-serif]">
        <div className="mt-9">
          <h1 className="text-[39px] leading-12 font-light">Immobiliare <b className="font-bold">0<span className="text-[#fa821e]">1</span></b></h1>
          <p className="mt-1.5 text-[21px] leading-7">Per l'Agente Immobiliare</p>
        </div>
        <div className="mt-4 flex h-[118px] font-light text-[#666]">
          <a href="#profilo" className="border-r-2 border-[#dcdddf] pr-4 pt-5">
            <span className="flex items-center gap-2 text-[34px] leading-10"><FaUser className="h-8 w-7 text-[#7c7c7c]" /> Il mio Profilo</span>
            <span className="block text-[28px] leading-11">mobijay.iphone@gmail.com</span>
          </a>
          <a href="#logout" className="flex h-15 items-center gap-2 pl-4 pt-5 text-[34px] leading-10"><FaSignOutAlt className="size-8 text-[#7c7c7c]" /> Logout</a>
        </div>
      </header>

      <main className="px-[94px] pb-16 pt-10">
        <button className="flex h-[84px] w-full gap-[18px] rounded-lg border-2 border-b-4 border-[#dcdddf] bg-[#f8f9fb] pl-9 pt-[14px] font-[Lato,sans-serif] text-[34px] leading-10 font-light text-[#343a40]">
          <FaRegFolder className="mt-1.5 size-8" /> Filtri di Ricerca
        </button>

        <div className="mt-10 flex gap-[9px] text-[32px] text-[#343a40]">
          <button aria-label="Mappa" className="flex h-19 w-22 items-center justify-center rounded-lg border-2 border-[#17a2b8]"><FaRegMap className="w-9" /></button>
          <button aria-label="Posizione" className="flex h-19 w-21 items-center justify-center rounded-lg border-2 border-[#17a2b8]"><FaLocationArrow className="w-8" /></button>
          <button aria-label="Clienti" className="flex h-19 w-[79px] items-center justify-center rounded-lg border-2 border-[#f8f9fa] text-[#4db8a5]"><FaUser className="w-7" /></button>
          <button aria-label="Immobili" className="flex h-19 w-22 items-center justify-center rounded-lg border-2 border-[#17a2b8] text-[#247ba0]"><FaHome className="w-9" /></button>
        </div>

        <div className="font-[Roboto,sans-serif]">
          <MapPanel />
        </div>

        <section className="mt-8 flex h-[174px] rounded-lg border-2 border-b-4 border-[#ededed] pl-[30px] pr-[56px]">
          <FaHome className="mt-[30px] h-16 w-[72px] text-[#247ba0]" />
          <div className="ml-[22px] mt-[30px] grow">
            <h2 className="font-[Lato,sans-serif] text-[42px] leading-12 font-light">Nuovo Immobile</h2>
            <p className="text-[32px] leading-12 text-[#777]">Aggiungi un nuovo Immobile</p>
          </div>
          <button aria-label="Aggiungi" className="mt-11 h-16 text-[64px] text-[#247ba0]"><FaPlus className="w-14" /></button>
        </section>

        <section className="mt-4 overflow-hidden rounded-lg border-2 border-b-4 border-[#ededed]">
          <div className="flex h-[54px] justify-between bg-[#666] pl-3 pr-[28px] font-[Lato,sans-serif] text-[28px] font-light text-white">
            <h3 className="leading-15">Lista Immobile Salvati (3)</h3>
            <button aria-label="Elimina tutti" className="mt-[10px] h-7 text-[28px] text-[#b3b3b3]"><FaTrashAlt className="w-6" /></button>
          </div>
          <ul>
            {listings.map((item, i) => <ListingItem key={item.title} item={item} first={i === 0} />)}
          </ul>
        </section>
      </main>

      <footer className="mt-auto flex h-[106px] items-center border-y-2 border-[#98989b] bg-[#f8f9fb] px-8 font-[Lato,sans-serif] text-[26px] font-light text-[#666]">
        <p>Contatti: <a href="mailto:info@immobiliare01.it" className="font-normal text-[#212529]">info@immobiliare01.it</a> ver. 1.2.6</p>
      </footer>

      <button aria-label="Chat" className="fixed bottom-6 right-14 flex size-32 items-center justify-center rounded-full bg-[#0275d8] shadow-[4px_6px_10px_rgba(0,0,0,0.45)]">
        <svg className="size-[72px]" viewBox="0 0 24 24"><path d="M20 2H4c-1.100 0-2 .9-2 2v18l4-4h14c1.100 0 2-.9 2-2V4c0-1.100-.9-2-2-2zM6 9h12v2H6V9zm8 5H6v-2h8v2zm4-6H6V6h12v2z" className="fill-white" /></svg>
      </button>
    </div>
  )
}

export default App
